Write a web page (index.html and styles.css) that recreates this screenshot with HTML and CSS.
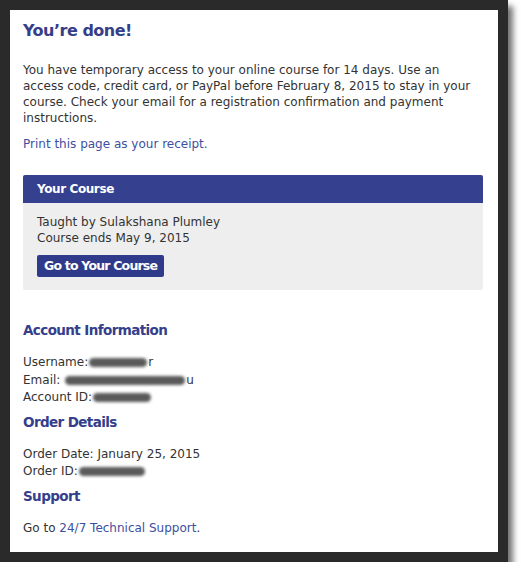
FILE: index.html
```html
<!DOCTYPE html>
<html>
<head>
    <meta charset="utf-8">
    <title>Registration Complete</title>
    <link rel="stylesheet" href="styles.css">
</head>
<body>
    <div class="frame">
        <div class="panel">
            <h1 class="title">You’re done!</h1>
            <p class="intro">You have temporary access to your online course for 14 days. Use an access code, credit card, or PayPal before February 8, 2015 to stay in your course. Check your email for a registration confirmation and payment instructions.</p>
            <p class="print"><a href="javascript:;">Print this page as your receipt.</a></p>

            <div class="course">
                <div class="course-head">Your Course</div>
                <div class="course-body">
                    <p>Taught by Sulakshana Plumley<br>Course ends May 9, 2015</p>
                    <a class="btn" href="javascript:;">Go to Your Course</a>
                </div>
            </div>

            <h2 class="section">Account Information</h2>
            <ul class="info">
                <li>Username:<span class="blur" style="width:58px"></span>r</li>
                <li>Email: <span class="blur" style="width:120px"></span>u</li>
                <li>Account ID:<span class="blur" style="width:58px"></span></li>
            </ul>

            <h2 class="section">Order Details</h2>
            <ul class="info">
                <li>Order Date: January 25, 2015</li>
                <li>Order ID:<span class="blur" style="width:66px"></span></li>
            </ul>

            <h2 class="section">Support</h2>
            <p class="support">Go to <a href="javascript:;">24/7 Technical Support</a>.</p>
        </div>
    </div>
</body>
</html>
```
FILE: styles.css
```css
*{margin:0;padding:0;list-style:none;}
body{background:#fff;font-family:"DejaVu Sans",Verdana,sans-serif;font-size:12px;color:#333;}
a{color:#3d4f9f;text-decoration:none;}
.frame{
    width:488px;
    padding:10px;
    background:#2a2a2a;
    box-shadow:5px 6px 6px rgba(0,0,0,0.55);
}
.panel{background:#fff;padding:10px 15px 18px 13px;height:514px;}
.title{font-size:16px;letter-spacing:-0.5px;font-weight:bold;color:#353e88;line-height:22px;}
.intro{margin-top:20px;line-height:16px;}
.print{margin-top:10px;line-height:16px;}
.course{margin-top:23px;background:#eee;border-radius:2px;padding-bottom:13px;}
.course-head{background:#35408f;color:#fff;font-weight:bold;font-size:12px;letter-spacing:-0.4px;height:28px;line-height:28px;padding-left:14px;border-radius:2px 2px 0 0;}
.course-body{padding:11px 14px 0;}
.course-body p{line-height:16px;}
.btn{display:inline-block;margin-top:9px;background:#2f3a8a;color:#fff;font-weight:bold;font-size:12.5px;letter-spacing:-0.8px;padding:0 7px;height:22px;line-height:22px;border-radius:2px;}
.section{font-size:13.5px;letter-spacing:-0.6px;font-weight:bold;color:#343e8b;line-height:20px;margin-top:30px;}
.info{margin-top:14px;line-height:17.5px;}
.info + .section{margin-top:5px;}
.blur{display:inline-block;height:9px;vertical-align:-1px;margin:0 1px;border-radius:5px;background:#5a5a5a;filter:blur(1.8px);}
.support{margin-top:14px;line-height:16px;}
```
